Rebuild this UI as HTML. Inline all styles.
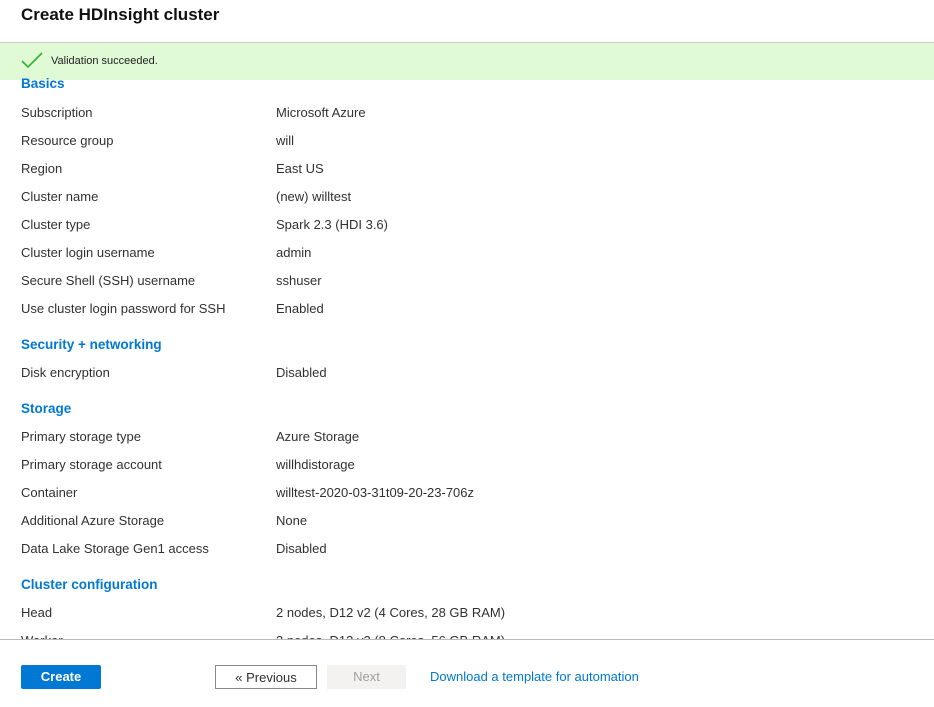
<!DOCTYPE html><html><head><style>
body{margin:0;width:934px;height:707px;background:#fff;font-family:"Liberation Sans",sans-serif;color:#323130;position:relative;overflow:hidden}
.a{position:absolute;white-space:nowrap}
h1{position:absolute;left:21px;top:5px;margin:0;font-size:17px;font-weight:bold;color:#111}
.ban{position:absolute;left:0;top:42px;width:934px;height:37px;background:#dffad5;border-top:1px solid #ccc}
.clip{position:absolute;left:0;top:0;width:934px;height:639px;overflow:hidden}
.r{position:absolute;font-size:13px;line-height:16px;top:0}
.h{position:absolute;left:21px;font-size:13.5px;font-weight:bold;color:#0078d4;line-height:18px}
.foot{position:absolute;left:0;top:639px;width:934px;border-top:1px solid #bbb}
.btn{position:absolute;top:665px;height:24px;font-size:13px;line-height:24px;text-align:center;box-sizing:border-box}
</style></head><body>
<h1>Create HDInsight cluster</h1>
<div class="clip">
<div class="ban"><svg class="a" style="left:21px;top:9px" width="22" height="16"><path d="M1 9 L7 15 L21 1" stroke="#2fb330" stroke-width="1.6" fill="none"/></svg><span class="a" style="left:51px;top:12px;font-size:11px;color:#222">Validation succeeded.</span></div>
<div class="h" style="top:75px">Basics</div>
<div class="r" style="left:21px;top:105px">Subscription</div><div class="r" style="left:276px;top:105px">Microsoft Azure</div>
<div class="r" style="left:21px;top:133px">Resource group</div><div class="r" style="left:276px;top:133px">will</div>
<div class="r" style="left:21px;top:161px">Region</div><div class="r" style="left:276px;top:161px">East US</div>
<div class="r" style="left:21px;top:189px">Cluster name</div><div class="r" style="left:276px;top:189px">(new) willtest</div>
<div class="r" style="left:21px;top:217px">Cluster type</div><div class="r" style="left:276px;top:217px">Spark 2.3 (HDI 3.6)</div>
<div class="r" style="left:21px;top:245px">Cluster login username</div><div class="r" style="left:276px;top:245px">admin</div>
<div class="r" style="left:21px;top:273px">Secure Shell (SSH) username</div><div class="r" style="left:276px;top:273px">sshuser</div>
<div class="r" style="left:21px;top:301px">Use cluster login password for SSH</div><div class="r" style="left:276px;top:301px">Enabled</div>
<div class="h" style="top:336px">Security + networking</div>
<div class="r" style="left:21px;top:365px">Disk encryption</div><div class="r" style="left:276px;top:365px">Disabled</div>
<div class="h" style="top:400px">Storage</div>
<div class="r" style="left:21px;top:429px">Primary storage type</div><div class="r" style="left:276px;top:429px">Azure Storage</div>
<div class="r" style="left:21px;top:457px">Primary storage account</div><div class="r" style="left:276px;top:457px">willhdistorage</div>
<div class="r" style="left:21px;top:485px">Container</div><div class="r" style="left:276px;top:485px">willtest-2020-03-31t09-20-23-706z</div>
<div class="r" style="left:21px;top:513px">Additional Azure Storage</div><div class="r" style="left:276px;top:513px">None</div>
<div class="r" style="left:21px;top:541px">Data Lake Storage Gen1 access</div><div class="r" style="left:276px;top:541px">Disabled</div>
<div class="h" style="top:576px">Cluster configuration</div>
<div class="r" style="left:21px;top:605px">Head</div><div class="r" style="left:276px;top:605px">2 nodes, D12 v2 (4 Cores, 28 GB RAM)</div>
<div class="r" style="left:21px;top:633px">Worker</div><div class="r" style="left:276px;top:633px">3 nodes, D13 v2 (8 Cores, 56 GB RAM)</div>
</div>
<div class="foot"></div>
<div class="btn" style="left:21px;width:80px;background:#0078d4;color:#fff;font-weight:bold;border-radius:2px">Create</div>
<div class="btn" style="left:215px;width:102px;border:1px solid #8a8886;color:#323130">« Previous</div>
<div class="btn" style="left:327px;width:79px;background:#f3f2f1;color:#a19f9d">Next</div>
<div class="a" style="left:430px;top:669px;font-size:13px;color:#0078d4">Download a template for automation</div>
</body></html>
